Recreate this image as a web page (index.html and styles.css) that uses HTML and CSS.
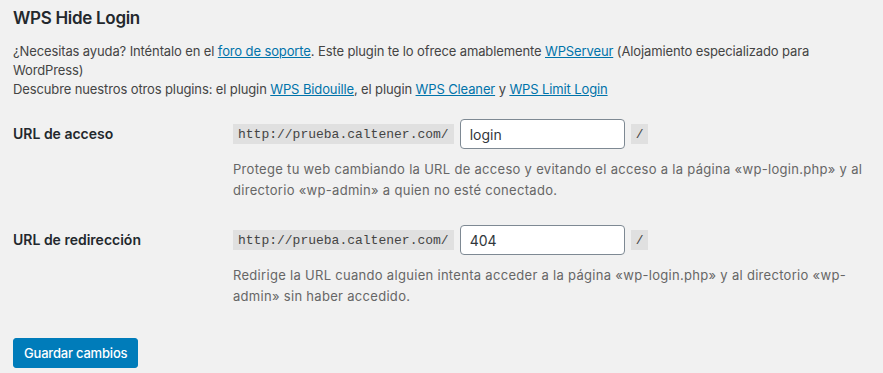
FILE: index.html
```html
<!DOCTYPE html>
<html lang="es">
<head>
  <meta charset="UTF-8" />
  <meta name="viewport" content="width=device-width, initial-scale=1.0"/>
  <title>WPS Hide Login</title>
  <link rel="stylesheet" href="styles.css">
</head>
<body>

  <div class="wrap">
    <h2 class="title">WPS Hide Login</h2>

    <p class="intro">
      ¿Necesitas ayuda? Inténtalo en el <a href="#">foro de soporte</a>. Este plugin te lo ofrece amablemente <a href="#">WPServeur</a> (Alojamiento especializado para WordPress)<br>
      Descubre nuestros otros plugins: el plugin <a href="#">WPS Bidouille</a>, el plugin <a href="#">WPS Cleaner</a> y <a href="#">WPS Limit Login</a>
    </p>

    <form>
      <table class="form-table">
        <tr>
          <th>URL de acceso</th>
          <td>
            <div class="url-field">
              <code>http://prueba.caltener.com/</code>
              <input type="text" class="slug" value="login">
              <code class="slash">/</code>
            </div>
            <p class="description">Protege tu web cambiando la URL de acceso y evitando el acceso a la página «wp-login.php» y al directorio «wp-admin» a quien no esté conectado.</p>
          </td>
        </tr>
        <tr>
          <th>URL de redirección</th>
          <td>
            <div class="url-field">
              <code>http://prueba.caltener.com/</code>
              <input type="text" class="slug" value="404">
              <code class="slash">/</code>
            </div>
            <p class="description">Redirige la URL cuando alguien intenta acceder a la página «wp-login.php» y al directorio «wp-admin» sin haber accedido.</p>
          </td>
        </tr>
      </table>

      <p class="submit">
        <button type="button" class="button-primary">Guardar cambios</button>
      </p>
    </form>
  </div>

</body>
</html>
```

FILE: styles.css
```css
:root {
  --bg-color: #f1f1f1;
  --text-color: #444444;
  --heading-color: #23282d;
  --muted-color: #666666;
  --link-color: #0073aa;
  --primary-color: #007cba;
}

* {
  margin: 0;
  padding: 0;
  box-sizing: border-box;
}

body {
  font-family: Inter, 'Liberation Sans', sans-serif;
  font-size: 13px;
  line-height: 1.5;
  background: var(--bg-color);
  color: var(--text-color);
}

.wrap {
  padding: 7px 10px 0 13px;
}

.title {
  font-size: 17px;
  font-weight: 600;
  line-height: 22px;
  letter-spacing: -0.3px;
  color: var(--heading-color);
  margin-bottom: 13px;
}

.intro {
  line-height: 19px;
  letter-spacing: -0.12px;
}

a {
  color: var(--link-color);
  text-decoration: underline;
}

.form-table {
  width: 100%;
  border-collapse: collapse;
  margin-top: 6px;
}

.form-table th {
  width: 210px;
  padding: 19px 10px 20px 0;
  text-align: left;
  vertical-align: top;
  font-weight: 600;
  font-size: 14px;
  line-height: 19px;
  color: var(--heading-color);
}

.form-table td {
  padding: 14px 10px 10px;
  vertical-align: top;
}

.url-field {
  display: flex;
  align-items: center;
  height: 30px;
}

code {
  font-family: 'Liberation Mono', 'DejaVu Sans Mono', monospace;
  font-size: 13px;
  line-height: 15px;
  padding: 3px 5px 2px;
  background: rgba(0, 0, 0, 0.07);
  color: var(--text-color);
}

.slug {
  width: 165px;
  height: 30px;
  margin: 0 6px 0 6px;
  padding: 0 9px;
  font-family: inherit;
  font-size: 14px;
  color: #32373c;
  background: #ffffff;
  border: 1px solid #7e8993;
  border-radius: 4px;
}

.description {
  margin-top: 10px;
  font-size: 13px;
  line-height: 21px;
  letter-spacing: 0.3px;
  color: var(--muted-color);
}

.submit {
  padding: 21px 0 20px;
}

.button-primary {
  height: 30px;
  padding: 0 10px;
  font-family: inherit;
  font-size: 13px;
  font-weight: 500;
  letter-spacing: -0.2px;
  color: #ffffff;
  background: var(--primary-color);
  border: 1px solid var(--primary-color);
  border-radius: 3px;
  cursor: pointer;
}
```
